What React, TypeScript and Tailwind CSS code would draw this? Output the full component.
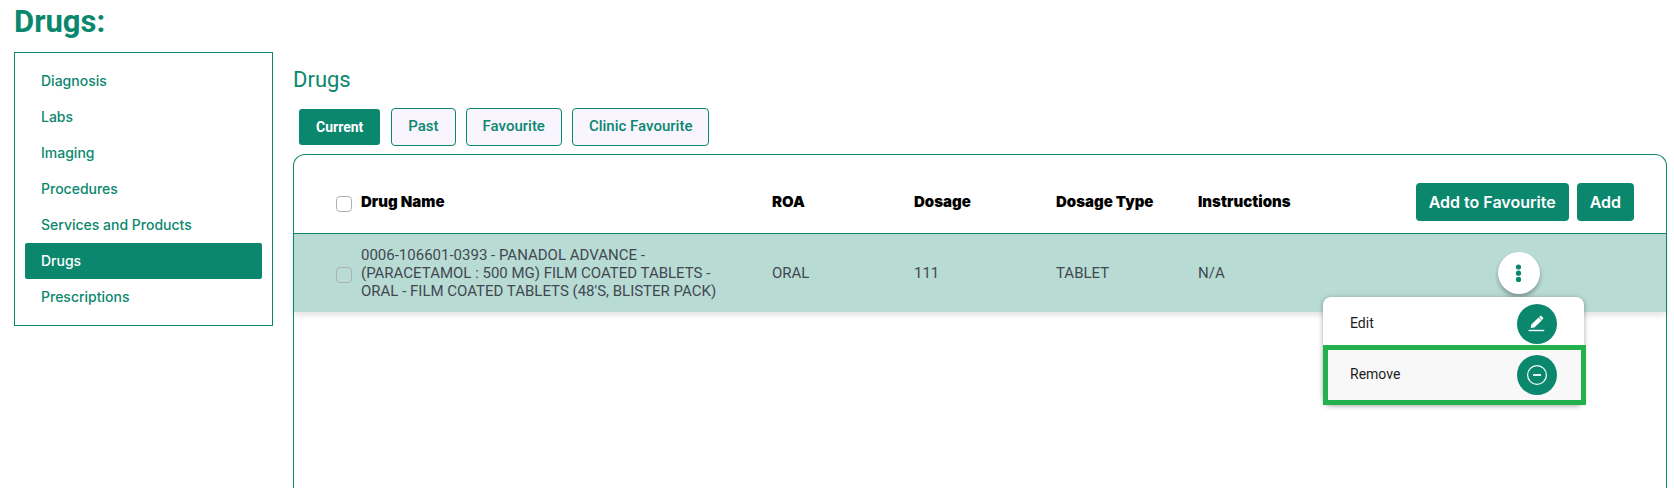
const sections = ['Diagnosis', 'Labs', 'Imaging', 'Procedures', 'Services and Products', 'Drugs', 'Prescriptions'];
const tabs = ['Current', 'Past', 'Favourite', 'Clinic Favourite'];

function Sidebar() {
  return (
    <nav aria-label="Sections" className="w-[259px] shrink-0 self-start border border-[#0b876e] p-[10px] font-['Inter',sans-serif] text-sm font-medium">
      <ul>
        {sections.map((name) => (
          <li key={name}>
            <a
              href="#"
              aria-current={name === 'Drugs' ? 'page' : undefined}
              className={
                name === 'Drugs'
                  ? 'flex h-9 items-center rounded-xs bg-[#0b876e] px-4 text-white'
                  : 'flex h-9 items-center rounded-xs px-4 text-[#0b876e]'
              }
            >
              {name}
            </a>
          </li>
        ))}
      </ul>
    </nav>
  );
}

function Tabs() {
  return (
    <div role="tablist" className="ml-[6px] flex items-center gap-[10px]">
      {tabs.map((name) => (
        <button
          key={name}
          type="button"
          role="tab"
          aria-selected={name === 'Current'}
          className={
            name === 'Current'
              ? 'mr-px h-9 rounded-[3px] bg-[#0b876e] px-[17px] text-sm font-bold text-white'
              : 'h-[38px] rounded border border-[#0b876e] bg-[#f8f5ff] px-4 pb-px text-[15px] font-medium text-[#0b876e]'
          }
        >
          {name}
        </button>
      ))}
    </div>
  );
}

function Checkbox({ label }: { label: string }) {
  return (
    <input
      type="checkbox"
      aria-label={label}
      className="ml-[42px] mt-1 block size-4 appearance-none rounded border border-[#b0b0b0] checked:bg-[#0b876e]"
    />
  );
}

function MoreIcon() {
  return (
    <svg viewBox="0 0 20 20" className="size-5" fill="currentColor" aria-hidden="true">
      <circle cx="9.5" cy="4" r="2.6" />
      <circle cx="9.5" cy="10.2" r="2.6" />
      <circle cx="9.5" cy="16.4" r="2.6" />
    </svg>
  );
}

function EditIcon() {
  return (
    <svg viewBox="0 0 20 20" className="size-5" fill="#fff" aria-hidden="true">
      <path d="M3.8 14 4.3 10.6 11.6 3.5 14.7 6.6 7.4 13.6ZM12.1 3 13.2 1.9Q13.8 1.4 14.4 1.9L16 3.5Q16.4 4.1 16 4.7L14.9 6.2Z" />
      <path d="M1.6 15.8h15.6v1.4H1.6z" />
    </svg>
  );
}

function RemoveIcon() {
  return (
    <svg viewBox="0 0 20 20" className="size-5" fill="none" stroke="#fff" aria-hidden="true">
      <circle cx="10" cy="10" r="9.4" strokeWidth="1.2" />
      <path d="M6 10h8" strokeWidth="1.8" />
    </svg>
  );
}

function RowMenu() {
  return (
    <div className="relative ml-auto mr-[126px] size-[42px]">
      <button
        type="button"
        aria-label="Row actions"
        className="flex size-full items-center justify-center rounded-full bg-white text-[#0b876e] shadow-[0_3px_4px_rgba(0,0,0,0.3)]"
      >
        <MoreIcon />
      </button>
      <div
        role="menu"
        className="absolute -right-11 top-[45px] z-10 w-[261px] rounded-lg bg-white text-sm text-[#1c1c1c] shadow-[0_1px_5px_rgba(0,0,0,0.35)]"
      >
        <button type="button" role="menuitem" className="flex h-[54px] w-full items-center justify-between pl-[27px] pr-[27px]">
          <span className="pb-[2px]">Edit</span>
          <span className="flex size-10 items-center justify-center rounded-full bg-[#0b876e]">
            <EditIcon />
          </span>
        </button>
        <button
          type="button"
          role="menuitem"
          className="-mt-[6px] flex h-[60px] w-[263px] items-center justify-between border-[5px] border-[#22b14c] bg-[#f8f8f8] pl-[22px] pr-6"
        >
          <span className="pb-[2px]">Remove</span>
          <span className="flex size-10 items-center justify-center rounded-full bg-[#0b876e]">
            <RemoveIcon />
          </span>
        </button>
      </div>
    </div>
  );
}

function DrugsTable() {
  return (
    <table className="w-full table-fixed border-separate border-spacing-0 text-left">
      <colgroup>
        <col className="w-[67px]" />
        <col />
        <col className="w-[142px]" />
        <col className="w-[142px]" />
        <col className="w-[142px]" />
        <col className="w-[142px]" />
        <col className="w-[326px]" />
      </colgroup>
      <thead className="font-['Inter',sans-serif] text-[15px] text-black">
        <tr className="h-[79px] *:border-b *:border-[#0b876e] *:pt-4">
          <td>
            <Checkbox label="Select all drugs" />
          </td>
          <th className="font-black">Drug Name</th>
          <th className="font-black">ROA</th>
          <th className="font-black">Dosage</th>
          <th className="font-black">Dosage Type</th>
          <th className="font-black">Instructions</th>
          <td className="pr-8">
            <div className="flex justify-end gap-2 text-base font-semibold text-white">
              <button type="button" className="h-[38px] whitespace-nowrap rounded bg-[#0b876e] px-[13px]">
                Add to Favourite
              </button>
              <button type="button" className="h-[38px] rounded bg-[#0b876e] px-[13px]">
                Add
              </button>
            </div>
          </td>
        </tr>
      </thead>
      <tbody className="text-[15px] leading-[18px] text-[#424852]">
        <tr className="h-[78px] bg-[#b8dbd4] shadow-[0_3px_6px_rgba(0,0,0,0.12)]">
          <td>
            <Checkbox label="Select Panadol Advance" />
          </td>
          <td className="pr-7">
            0006-106601-0393 - PANADOL ADVANCE - (PARACETAMOL : 500 MG) FILM COATED TABLETS - ORAL - FILM COATED
            TABLETS (48'S, BLISTER PACK)
          </td>
          <td>ORAL</td>
          <td>111</td>
          <td>TABLET</td>
          <td>N/A</td>
          <td>
            <RowMenu />
          </td>
        </tr>
      </tbody>
    </table>
  );
}

export default function App() {
  return (
    <div className="flex min-h-screen flex-col bg-white pl-[14px] pr-[7px] font-['Roboto',sans-serif]">
      <h1 className="h-[52px] text-[31px] font-bold leading-[44px] text-[#0b876e]">Drugs:</h1>
      <div className="flex flex-1 gap-5">
        <Sidebar />
        <main className="flex min-w-0 flex-1 flex-col pt-[13px]">
          <h2 className="mb-[13px] text-[22px] leading-[30px] text-[#0b876e]">Drugs</h2>
          <Tabs />
          <section className="mt-2 flex-1 rounded-t-xl border border-b-0 border-[#0b876e]">
            <DrugsTable />
          </section>
        </main>
      </div>
    </div>
  );
}
